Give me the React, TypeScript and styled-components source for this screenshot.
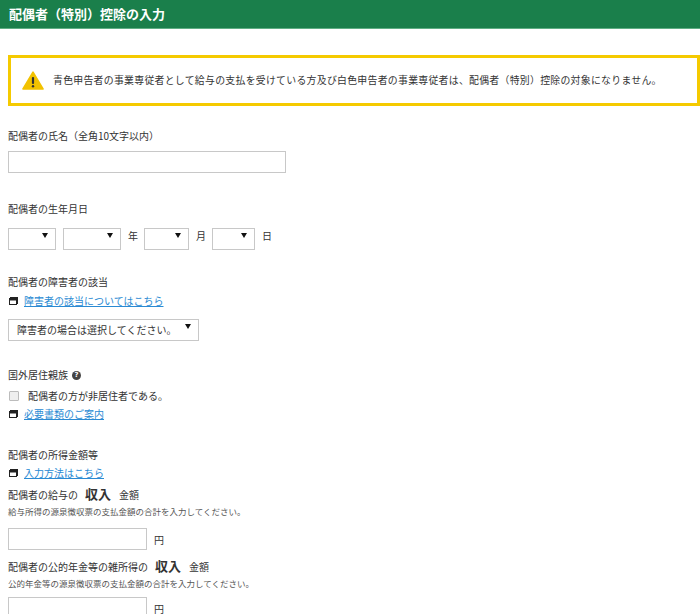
import React from "react";
import styled, { createGlobalStyle } from "styled-components";

const GlobalStyle = createGlobalStyle`
  html, body {
    margin: 0;
    padding: 0;
    background: #fff;
  }
  body {
    font-family: "Noto Sans CJK JP", "Noto Sans", sans-serif;
    color: #333;
  }
`;

const Page = styled.div`
  width: 700px;
`;

const Header = styled.header`
  height: 29px;
  background: #1a7f4b;
  border-bottom: 1px solid #5fae84;
  display: flex;
  align-items: center;
  padding-left: 9px;
  padding-bottom: 2px;
  box-sizing: border-box;
`;

const Title = styled.h1`
  margin: 0;
  font-size: 13px;
  font-weight: bold;
  color: #fff;
  line-height: 1;
`;

const Warning = styled.div`
  margin: 26px 0 0 8px;
  height: 51px;
  box-sizing: border-box;
  border: 3px solid #f5ca00;
  display: flex;
  align-items: center;
  gap: 9px;
  padding-left: 11px;
  padding-bottom: 1px;
`;

const WarningText = styled.p`
  margin: 0;
  font-size: 9.9px;
  letter-spacing: 0.28px;
  color: #333;
  white-space: nowrap;
`;

const Form = styled.div`
  padding: 22px 0 0 8px;
`;

const Section = styled.section<{ $after?: number }>`
  padding-bottom: ${(p) => p.$after ?? 28}px;
`;

const Label = styled.div<{ $gap?: number }>`
  font-size: 10px;
  line-height: 16px;
  color: #333;
  margin-bottom: ${(p) => p.$gap ?? 0}px;
  display: flex;
  align-items: center;
  gap: 4px;
`;

const SubLabel = styled.div<{ $mt?: number }>`
  font-size: 10px;
  line-height: 18px;
  margin-top: ${(p) => p.$mt ?? 4}px;
  display: flex;
  align-items: baseline;
  white-space: nowrap;
`;

const Strong = styled.b`
  font-size: 13px;
  font-weight: bold;
  margin: 0 8px 0 7px;
`;

const Hint = styled.div`
  font-size: 8.5px;
  line-height: 12px;
  color: #555;
  margin-top: 1px;
`;

const TextInput = styled.input<{ $w: number }>`
  display: block;
  width: ${(p) => p.$w}px;
  height: 22px;
  box-sizing: border-box;
  border: 1px solid #c8c8c8;
  border-radius: 0;
  padding: 0 4px;
  margin: 0;
  font: inherit;
  font-size: 10px;
`;

const Row = styled.div<{ $mt?: number }>`
  display: flex;
  align-items: center;
  margin-top: ${(p) => p.$mt ?? 0}px;
`;

const Unit = styled.span`
  font-size: 10px;
  margin: 0 6px 0 7px;
`;

const SelectWrap = styled.div<{ $w: number; $ml?: number }>`
  position: relative;
  width: ${(p) => p.$w}px;
  height: 22px;
  margin-left: ${(p) => p.$ml ?? 0}px;
  &::after {
    content: "";
    position: absolute;
    right: 8px;
    top: 9px;
    border-left: 3px solid transparent;
    border-right: 3px solid transparent;
    border-top: 5px solid #111;
    pointer-events: none;
  }
`;

const Select = styled.select`
  appearance: none;
  width: 100%;
  height: 100%;
  box-sizing: border-box;
  border: 1px solid #c8c8c8;
  border-radius: 0;
  background: #fff;
  font-family: "Noto Sans CJK JP", sans-serif;
  font-size: 10px;
  color: #333;
  padding: 0 0 0 8px;
  margin: 0;
`;

const LinkRow = styled.div<{ $mt?: number }>`
  display: flex;
  align-items: center;
  gap: 6px;
  margin-top: ${(p) => p.$mt ?? 0}px;
  line-height: 16px;
  padding-left: 1px;
`;

const Link = styled.a`
  font-size: 10px;
  color: #2a8ad3;
  text-decoration: underline;
  cursor: pointer;
`;

const HelpIcon = styled.span`
  display: inline-flex;
  width: 9px;
  height: 9px;
  border-radius: 50%;
  background: #444;
  color: #fff;
  font-size: 7px;
  font-weight: bold;
  align-items: center;
  justify-content: center;
  line-height: 1;
  font-family: "DejaVu Sans", sans-serif;
`;

const CheckRow = styled.label`
  display: flex;
  align-items: center;
  gap: 9px;
  margin-top: 5px;
  line-height: 16px;
  font-size: 10px;
  padding-left: 1px;
`;

const CheckBox = styled.span`
  display: inline-block;
  width: 8px;
  height: 8px;
  border: 1px solid #bcbcbc;
  background: #efefef;
  border-radius: 1px;
`;

const WarnIcon = () => (
  <svg width="22" height="19" viewBox="0 0 22 19">
    <path d="M11 1.2 L21 18 L1 18 Z" fill="#f2c200" stroke="#f2c200" strokeWidth="1.6" strokeLinejoin="round" />
    <rect x="9.9" y="6" width="2.2" height="7" rx="1" fill="#333" />
    <circle cx="11" cy="15.3" r="1.2" fill="#333" />
  </svg>
);

const WinIcon = () => (
  <svg width="9" height="8" viewBox="0 0 9 8">
    <rect x="1.5" y="0.5" width="7" height="6" fill="none" stroke="#222" strokeWidth="1" />
    <rect x="0.5" y="1.5" width="7" height="6" fill="#fff" stroke="#222" strokeWidth="1" />
    <rect x="0.5" y="1.5" width="7" height="2" fill="#222" />
  </svg>
);

export default function App() {
  return (
    <Page>
      <GlobalStyle />
      <Header>
        <Title>配偶者（特別）控除の入力</Title>
      </Header>
      <Warning>
        <WarnIcon />
        <WarningText>
          青色申告者の事業専従者として給与の支払を受けている方及び白色申告者の事業専従者は、配偶者（特別）控除の対象になりません。
        </WarningText>
      </Warning>
      <Form>
        <Section>
          <Label $gap={7}>配偶者の氏名（全角10文字以内）</Label>
          <TextInput $w={278} />
        </Section>
        <Section>
          <Label $gap={7}>配偶者の生年月日</Label>
          <Row>
            <SelectWrap $w={48}>
              <Select />
            </SelectWrap>
            <SelectWrap $w={58} $ml={7}>
              <Select />
            </SelectWrap>
            <Unit>年</Unit>
            <SelectWrap $w={45}>
              <Select />
            </SelectWrap>
            <Unit>月</Unit>
            <SelectWrap $w={43}>
              <Select />
            </SelectWrap>
            <Unit>日</Unit>
          </Row>
        </Section>
        <Section $after={30}>
          <Label>配偶者の障害者の該当</Label>
          <LinkRow $mt={3}>
            <WinIcon />
            <Link>障害者の該当についてはこちら</Link>
          </LinkRow>
          <Row $mt={6}>
            <SelectWrap $w={191}>
              <Select>
                <option>障害者の場合は選択してください。</option>
              </Select>
            </SelectWrap>
          </Row>
        </Section>
        <Section $after={25}>
          <Label>
            国外居住親族 <HelpIcon>?</HelpIcon>
          </Label>
          <CheckRow>
            <CheckBox />
            配偶者の方が非居住者である。
          </CheckRow>
          <LinkRow $mt={2}>
            <WinIcon />
            <Link>必要書類のご案内</Link>
          </LinkRow>
        </Section>
        <Section>
          <Label>配偶者の所得金額等</Label>
          <LinkRow $mt={2}>
            <WinIcon />
            <Link>入力方法はこちら</Link>
          </LinkRow>
          <SubLabel>
            配偶者の給与の<Strong>収入</Strong>金額
          </SubLabel>
          <Hint>給与所得の源泉徴収票の支払金額の合計を入力してください。</Hint>
          <Row $mt={11}>
            <TextInput $w={139} />
            <Unit>円</Unit>
          </Row>
          <SubLabel $mt={7}>
            配偶者の公的年金等の雑所得の<Strong>収入</Strong>金額
          </SubLabel>
          <Hint>公的年金等の源泉徴収票の支払金額の合計を入力してください。</Hint>
          <Row $mt={8}>
            <TextInput $w={139} />
            <Unit>円</Unit>
          </Row>
        </Section>
      </Form>
    </Page>
  );
}
